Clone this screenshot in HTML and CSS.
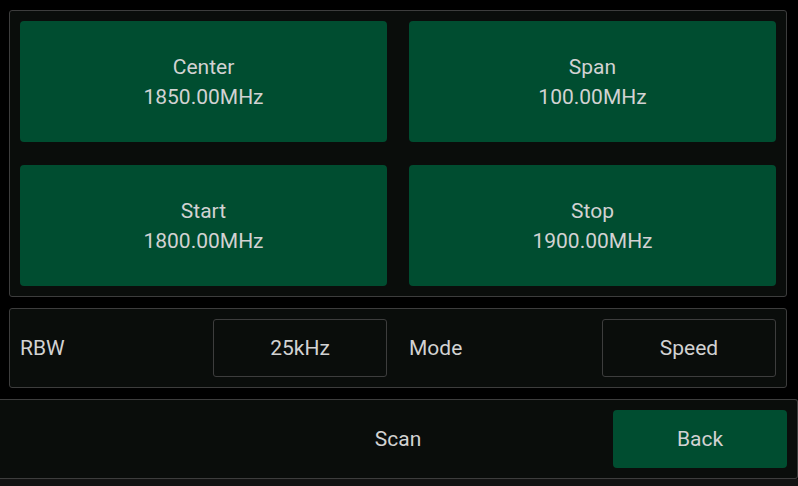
FILE: index.html
```html
<!DOCTYPE html>
<html lang="en">
<head>
    <meta charset="UTF-8">
    <meta name="viewport" content="width=device-width, initial-scale=1.0">
    <title>Frequency</title>
    <link rel="stylesheet" href="styles.css">
</head>
<body>

<div class="panel freq-grid">
    <button class="freq-btn">Center<br>1850.00MHz</button>
    <button class="freq-btn">Span<br>100.00MHz</button>
    <button class="freq-btn">Start<br>1800.00MHz</button>
    <button class="freq-btn">Stop<br>1900.00MHz</button>
</div>

<div class="panel settings">
    <div class="setting">
        <span class="setting-label">RBW</span>
        <button class="setting-value">25kHz</button>
    </div>
    <div class="setting">
        <span class="setting-label">Mode</span>
        <button class="setting-value">Speed</button>
    </div>
</div>

<div class="action-bar">
    <span></span>
    <button class="scan-btn">Scan</button>
    <button class="back-btn">Back</button>
</div>

<div class="footer"></div>

</body>
</html>
```

FILE: styles.css
```css
:root {
    --panelBg: #0a0d0b;
    --borderColor: #3d3d3d;
    --green: #004d30;
    --textColor: #d2d2d2;
}

html, body {
    height: 100%;
}

body {
    margin: 0;
    padding: 10px 0 0 0;
    box-sizing: border-box;
    background-color: #000;
    font-family: Roboto, "Liberation Sans", sans-serif;
    font-size: 21px;
    color: var(--textColor);
    display: flex;
    flex-direction: column;
    overflow: hidden;
}

button {
    font-family: inherit;
    font-size: inherit;
    color: var(--textColor);
    cursor: pointer;
}

.panel {
    margin: 0 11px 0 9px;
    padding: 10px;
    background: var(--panelBg);
    border: 1px solid var(--borderColor);
    border-radius: 3px;
}

/* Frequenties */
.freq-grid {
    display: grid;
    grid-template-columns: 1fr 1fr;
    grid-template-rows: 121px 121px;
    column-gap: 22px;
    row-gap: 23px;
}

.freq-btn {
    background: var(--green);
    border: none;
    border-radius: 4px;
    line-height: 30px;
    padding: 0;
}

/* RBW / Mode */
.settings {
    margin-top: 11px;
    display: grid;
    grid-template-columns: 1fr 1fr;
    column-gap: 22px;
}

.setting {
    display: flex;
    justify-content: space-between;
    align-items: center;
}

.setting-value {
    width: 174px;
    height: 58px;
    background: var(--panelBg);
    border: 1px solid var(--borderColor);
    border-radius: 3px;
    padding: 0;
}

/* Onderbalk */
.action-bar {
    margin: 11px 0 0 -1px;
    padding: 10px;
    display: grid;
    grid-template-columns: 1fr auto 1fr;
    align-items: center;
    background: var(--panelBg);
    border: 1px solid var(--borderColor);
    border-left: none;
    border-radius: 0 3px 3px 0;
}

.scan-btn {
    background: none;
    border: none;
    padding: 0;
}

.back-btn {
    justify-self: end;
    width: 174px;
    height: 58px;
    background: var(--green);
    border: none;
    border-radius: 4px;
    padding: 0;
}

.footer {
    flex: 1;
    background: #131313;
}
```
